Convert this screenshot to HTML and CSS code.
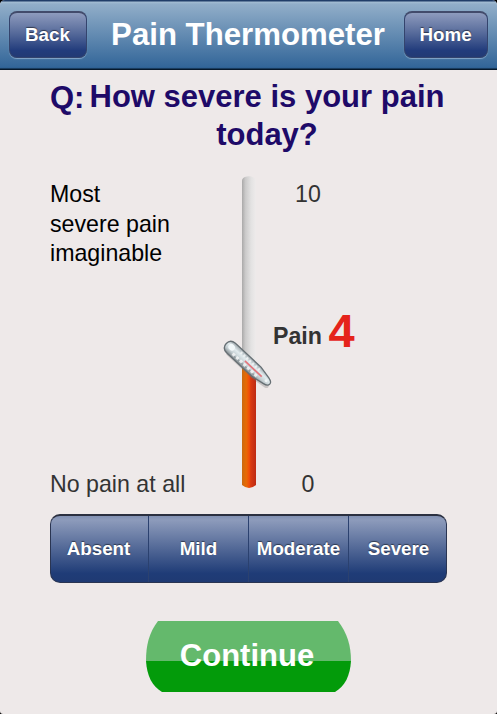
FILE: index.html
```html
<!DOCTYPE html>
<html lang="en">
<head>
    <meta charset="UTF-8">
    <meta name="viewport" content="width=device-width, initial-scale=1.0">
    <title>Pain Thermometer</title>
    <link rel="stylesheet" href="styles.css">
</head>
<body>

<header class="navbar">
    <button type="button" class="nav-button back">Back</button>
    <h1>Pain Thermometer</h1>
    <button type="button" class="nav-button home">Home</button>
</header>

<main class="content">
    <div class="question">
        <span class="question-label">Q:</span>
        <h2>How severe is your pain today?</h2>
    </div>

    <div class="scale">
        <div class="labels">
            <p class="label-top">Most<br>severe pain<br>imaginable</p>
            <p class="label-bottom">No pain at all</p>
        </div>
        <div class="thermometer">
            <svg class="tube" width="60" height="320" viewBox="0 0 60 320">
                <defs>
                    <linearGradient id="glass">
                        <stop offset="0" stop-color="#aaa9a9"/>
                        <stop offset="0.25" stop-color="#cbcaca"/>
                        <stop offset="0.65" stop-color="#e3e2e2"/>
                        <stop offset="1" stop-color="#eeebeb"/>
                    </linearGradient>
                    <linearGradient id="mercury">
                        <stop offset="0" stop-color="#c96a10"/>
                        <stop offset="0.3" stop-color="#e86a04"/>
                        <stop offset="0.52" stop-color="#f04c08"/>
                        <stop offset="0.62" stop-color="#d93a12"/>
                        <stop offset="1" stop-color="#bd2a14"/>
                    </linearGradient>
                    <linearGradient id="metal" x1="0" y1="0" x2="0" y2="1">
                        <stop offset="0" stop-color="#9da7ac"/>
                        <stop offset="0.35" stop-color="#e2ebee"/>
                        <stop offset="0.7" stop-color="#c4ced2"/>
                        <stop offset="1" stop-color="#7f878b"/>
                    </linearGradient>
                </defs>
                <path fill="url(#glass)" d="M22 200V11q0-4 5-4.500q6-1 9 3.500V200z"/>
                <path fill="url(#mercury)" d="M22 192h14v123q-7 6-14 0z"/>
                <!-- slider handle -->
                <g transform="translate(11 178) rotate(43)">
                    <path fill="#756f6f" opacity="0.300" d="M1-4H37L52 0q4 4 0 6L36 8H1z"/>
                    <path fill="url(#metal)" stroke="#666f74" stroke-width="1.300" d="M0-6.500Q-6.500-6-6.500 0T0 6.500H35L48 4Q53 3 53 0T48-4L35-6.500z"/>
                    <path stroke="#fff" stroke-width="2.500" stroke-dasharray="2 2" opacity="0.650" d="M10-3.500H38"/>
                    <path stroke="#fff" stroke-width="3" stroke-dasharray="3 2" opacity="0.700" d="M5 3H38"/>
                    <path stroke="#7d888d" stroke-width="1.500" stroke-dasharray="2 3" opacity="0.500" d="M8 4H38"/>
                    <path stroke="#e5747b" stroke-width="1.600" d="M19 0H42"/>
                    <ellipse cx="0" cy="-1" rx="3.500" ry="3" fill="#f2f8fa"/>
                    <circle cx="48" cy="0" r="1.500" fill="#f2f6f7"/>
                </g>
            </svg>
        </div>
        <div class="values">
            <span class="max">10</span>
            <span class="current">Pain <strong>4</strong></span>
            <span class="min">0</span>
        </div>
    </div>

    <div class="segments">
        <button type="button">Absent</button>
        <button type="button">Mild</button>
        <button type="button">Moderate</button>
        <button type="button">Severe</button>
    </div>

    <button type="button" class="continue">
        <svg class="continue-shape" width="206" height="72" viewBox="0 0 206 72">
            <path fill="#64b96c" d="M12 0H192C201 12 205 24 205 40H0C0 24 3 12 12 0z"/>
            <path fill="#039b0a" d="M0 40H205C204 55 199 65 189 71H16C6 65 1 55 0 40z"/>
        </svg>
        <span>Continue</span>
    </button>
</main>

</body>
</html>
```
FILE: styles.css
```css
* {
    box-sizing: border-box;
}
html {
    background-color: #000;
}
body {
    font-family: "Liberation Sans", Arial, sans-serif;
    background-color: #eee9e9;
    margin: 0;
    height: 714px;
    overflow: hidden;
    border-radius: 5px 5px 3px 3px;
}
h1, h2, p {
    margin: 0;
}
button {
    font-family: inherit;
    font-weight: bold;
    color: white;
    padding: 0;
    border: none;
    cursor: pointer;
}
.navbar {
    display: grid;
    grid-template-columns: 78px 1fr 84px;
    height: 70px;
    padding: 11px 9px 0;
    background: linear-gradient(#203d68 0, #203d68 1px, #a4bdd3 2px, #91aec9 4px, #336699 67px, #2c5f91 68px, #06192c 69px);
}
.navbar h1 {
    padding-left: 5px;
    font-size: 31.2px;
    line-height: 47px;
    text-align: center;
    white-space: nowrap;
    color: white;
}
.nav-button {
    height: 47px;
    border: 1px solid #34446d;
    border-top: 2px solid #424b6b;
    border-radius: 8px;
    background: linear-gradient(#8e9bbd, #576b9b 45%, #223c7c 85%, #223a74);
    box-shadow: 0 1px 1px rgba(180, 205, 230, 0.6);
    font-size: 18.8px;
    text-shadow: 0 -1px 1px rgba(0, 0, 0, 0.5);
}
.nav-button.back {
    padding-right: 1px;
}
.nav-button.home {
    padding-right: 1px;
}
.content {
    display: flex;
    flex-direction: column;
    padding: 0 50px;
}
.question {
    display: flex;
    height: 100px;
    padding-top: 8px;
    color: #1e0a68;
    font-size: 31px;
    font-weight: bold;
    line-height: 38px;
}
.question-label {
    width: 39px;
    padding-top: 1px;
}
.question h2 {
    width: 356px;
    font-size: 31px;
    text-align: center;
}
.scale {
    display: grid;
    grid-template-columns: 170px 52px 1fr;
    height: 344px;
    font-size: 23.2px;
    line-height: 29.5px;
    color: #333;
}
.labels {
    display: flex;
    flex-direction: column;
    justify-content: space-between;
    padding: 10px 0 15px;
}
.label-top {
    color: #000;
}
.values {
    display: grid;
    grid-template-rows: 126px 1fr auto;
    padding: 10px 0 15px 1px;
}
.max, .min {
    width: 70px;
    text-align: center;
}
.current {
    font-weight: bold;
    line-height: 50px;
    white-space: nowrap;
}
.current strong {
    font-size: 47px;
    vertical-align: -3px;
    color: #e5231b;
}
.segments {
    display: grid;
    grid-template-columns: 98px 100px 100px 97px;
    width: 397px;
    height: 69px;
    border: 1px solid #2a3552;
    border-top: 2px solid #2b3040;
    border-radius: 10px;
    overflow: hidden;
    background: linear-gradient(#8291b3, #8d9bbb 6%, #1f3c77 87%, #1f3a73);
}
.segments button {
    background: none;
    border-right: 1px solid #2b416f;
    font-size: 18.8px;
    text-shadow: 0 -1px 1px rgba(0, 0, 0, 0.5);
}
.segments button:first-child {
    padding-right: 2px;
}
.segments button:last-child {
    border-right: none;
    padding-left: 2px;
}
.continue {
    display: grid;
    width: 206px;
    height: 72px;
    margin: 38px 0 0 96px;
    background: none;
    font-size: 31px;
    line-height: 69px;
}
.continue-shape, .continue span {
    grid-area: 1 / 1;
}
.continue span {
    padding-right: 4px;
}
```
